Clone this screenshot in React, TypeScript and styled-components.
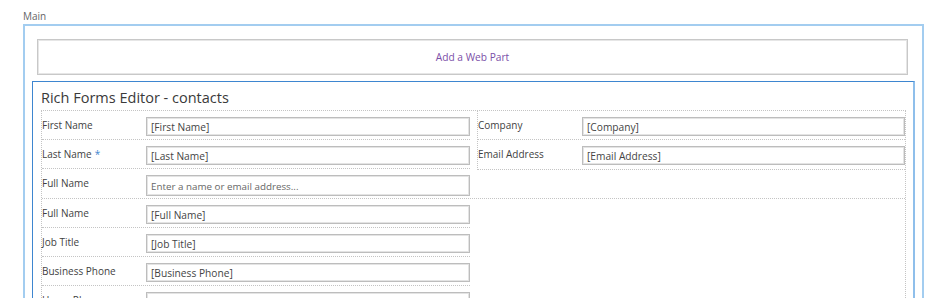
import styled, { createGlobalStyle } from "styled-components";

const GlobalStyle = createGlobalStyle`
  html, body {
    margin: 0;
    padding: 0;
    overflow: hidden;
    background: #ffffff;
  }
  body {
    font-family: "Open Sans", "Liberation Sans", sans-serif;
    color: #444444;
  }
`;

const Page = styled.div`
  padding: 9px 0 0 23px;
`;

const ZoneLabel = styled.div`
  font-size: 10px;
  line-height: 14px;
  color: #666666;
  margin-bottom: 1px;
`;

const Zone = styled.div`
  width: 901px;
  box-sizing: border-box;
  border: 2px solid #a3cdf0;
  border-bottom: none;
  padding: 13px 0 0 0;
  height: 300px;
`;

const AddWebPart = styled.div`
  margin-left: 12px;
  width: 871px;
  height: 36px;
  box-sizing: border-box;
  border: 1px solid #c8c8c8;
  box-shadow: inset 0 0 0 1px #e6e6e6;
  display: flex;
  align-items: center;
  justify-content: center;
  font-size: 10.2px;
  color: #7b4fa8;
`;

const WebPart = styled.div`
  margin: 6px 0 0 7px;
  width: 883px;
  box-sizing: border-box;
  border: 1px solid #3e86d0;
  border-right: 2px solid #8fbfeb;
  border-bottom: none;
  padding: 5px 7px 0 8px;
  height: 260px;
`;

const Title = styled.div`
  font-size: 14.5px;
  line-height: 22px;
  color: #3a3a3a;
  margin-bottom: 1px;
`;

const FormTable = styled.div`
  border: 1px dotted #c4c4c4;
  border-bottom: none;
`;

const Section = styled.div<{ $divided?: boolean }>`
  display: grid;
  grid-template-columns: 428px 1fr;
  column-gap: 7px;
  border-top: ${(p) => (p.$divided ? "1px dotted #c4c4c4" : "none")};
`;

const Column = styled.div<{ $boxed?: boolean }>`
  display: flex;
  flex-direction: column;
  align-self: start;
  border-left: ${(p) => (p.$boxed ? "1px dotted #c4c4c4" : "none")};
  border-bottom: ${(p) => (p.$boxed ? "1px dotted #c4c4c4" : "none")};
`;

const Row = styled.div<{ $last?: boolean }>`
  display: flex;
  align-items: flex-start;
  min-height: 29px;
  box-sizing: border-box;
  padding-top: 6px;
  border-bottom: ${(p) => (p.$last ? "none" : "1px dotted #c4c4c4")};
`;

const Label = styled.div`
  width: 104px;
  flex: none;
  font-size: 10px;
  line-height: 14px;
  padding-top: 1px;
  color: #3f3f3f;
`;

const Required = styled.span`
  color: #3f86d0;
  margin-left: 3px;
`;

const Input = styled.div<{ $tall?: boolean; $placeholder?: boolean }>`
  flex: 1;
  height: ${(p) => (p.$tall ? "21px" : "19px")};
  box-sizing: border-box;
  border: 1px solid #bdbdbd;
  box-shadow: inset 0 0 0 1px #e4e4e4;
  padding: 1px 0 0 4px;
  display: flex;
  align-items: center;
  font-size: ${(p) => (p.$placeholder ? "9.8px" : "10.2px")};
  color: ${(p) => (p.$placeholder ? "#666666" : "#444444")};
  white-space: nowrap;
  overflow: hidden;
`;

type Field = { label: string; value: string; required?: boolean; picker?: boolean };

const leftTop: Field[] = [
  { label: "First Name", value: "[First Name]" },
  { label: "Last Name", value: "[Last Name]", required: true },
  { label: "Full Name", value: "Enter a name or email address...", picker: true },
];

const rightTop: Field[] = [
  { label: "Company", value: "[Company]" },
  { label: "Email Address", value: "[Email Address]" },
];

const leftBottom: Field[] = [
  { label: "Full Name", value: "[Full Name]" },
  { label: "Job Title", value: "[Job Title]" },
  { label: "Business Phone", value: "[Business Phone]" },
  { label: "Home Phone", value: "[Home Phone]" },
  { label: "Mobile Number", value: "[Mobile Number]" },
];

function FieldRow({ field, last }: { field: Field; last?: boolean }) {
  return (
    <Row $last={last}>
      <Label>
        {field.label}
        {field.required && <Required>*</Required>}
      </Label>
      <Input $tall={field.picker} $placeholder={field.picker}>
        {field.value}
      </Input>
    </Row>
  );
}

export default function App() {
  return (
    <>
      <GlobalStyle />
      <Page>
        <ZoneLabel>Main</ZoneLabel>
        <Zone>
          <AddWebPart>Add a Web Part</AddWebPart>
          <WebPart>
            <Title>Rich Forms Editor - contacts</Title>
            <FormTable>
              <Section>
                <Column>
                  {leftTop.map((f, i) => (
                    <FieldRow key={f.label + i} field={f} last={i === leftTop.length - 1} />
                  ))}
                </Column>
                <Column $boxed>
                  {rightTop.map((f, i) => (
                    <FieldRow key={f.label} field={f} last={i === rightTop.length - 1} />
                  ))}
                </Column>
              </Section>
              <Section $divided>
                <Column>
                  {leftBottom.map((f) => (
                    <FieldRow key={f.label} field={f} />
                  ))}
                </Column>
              </Section>
            </FormTable>
          </WebPart>
        </Zone>
      </Page>
    </>
  );
}
